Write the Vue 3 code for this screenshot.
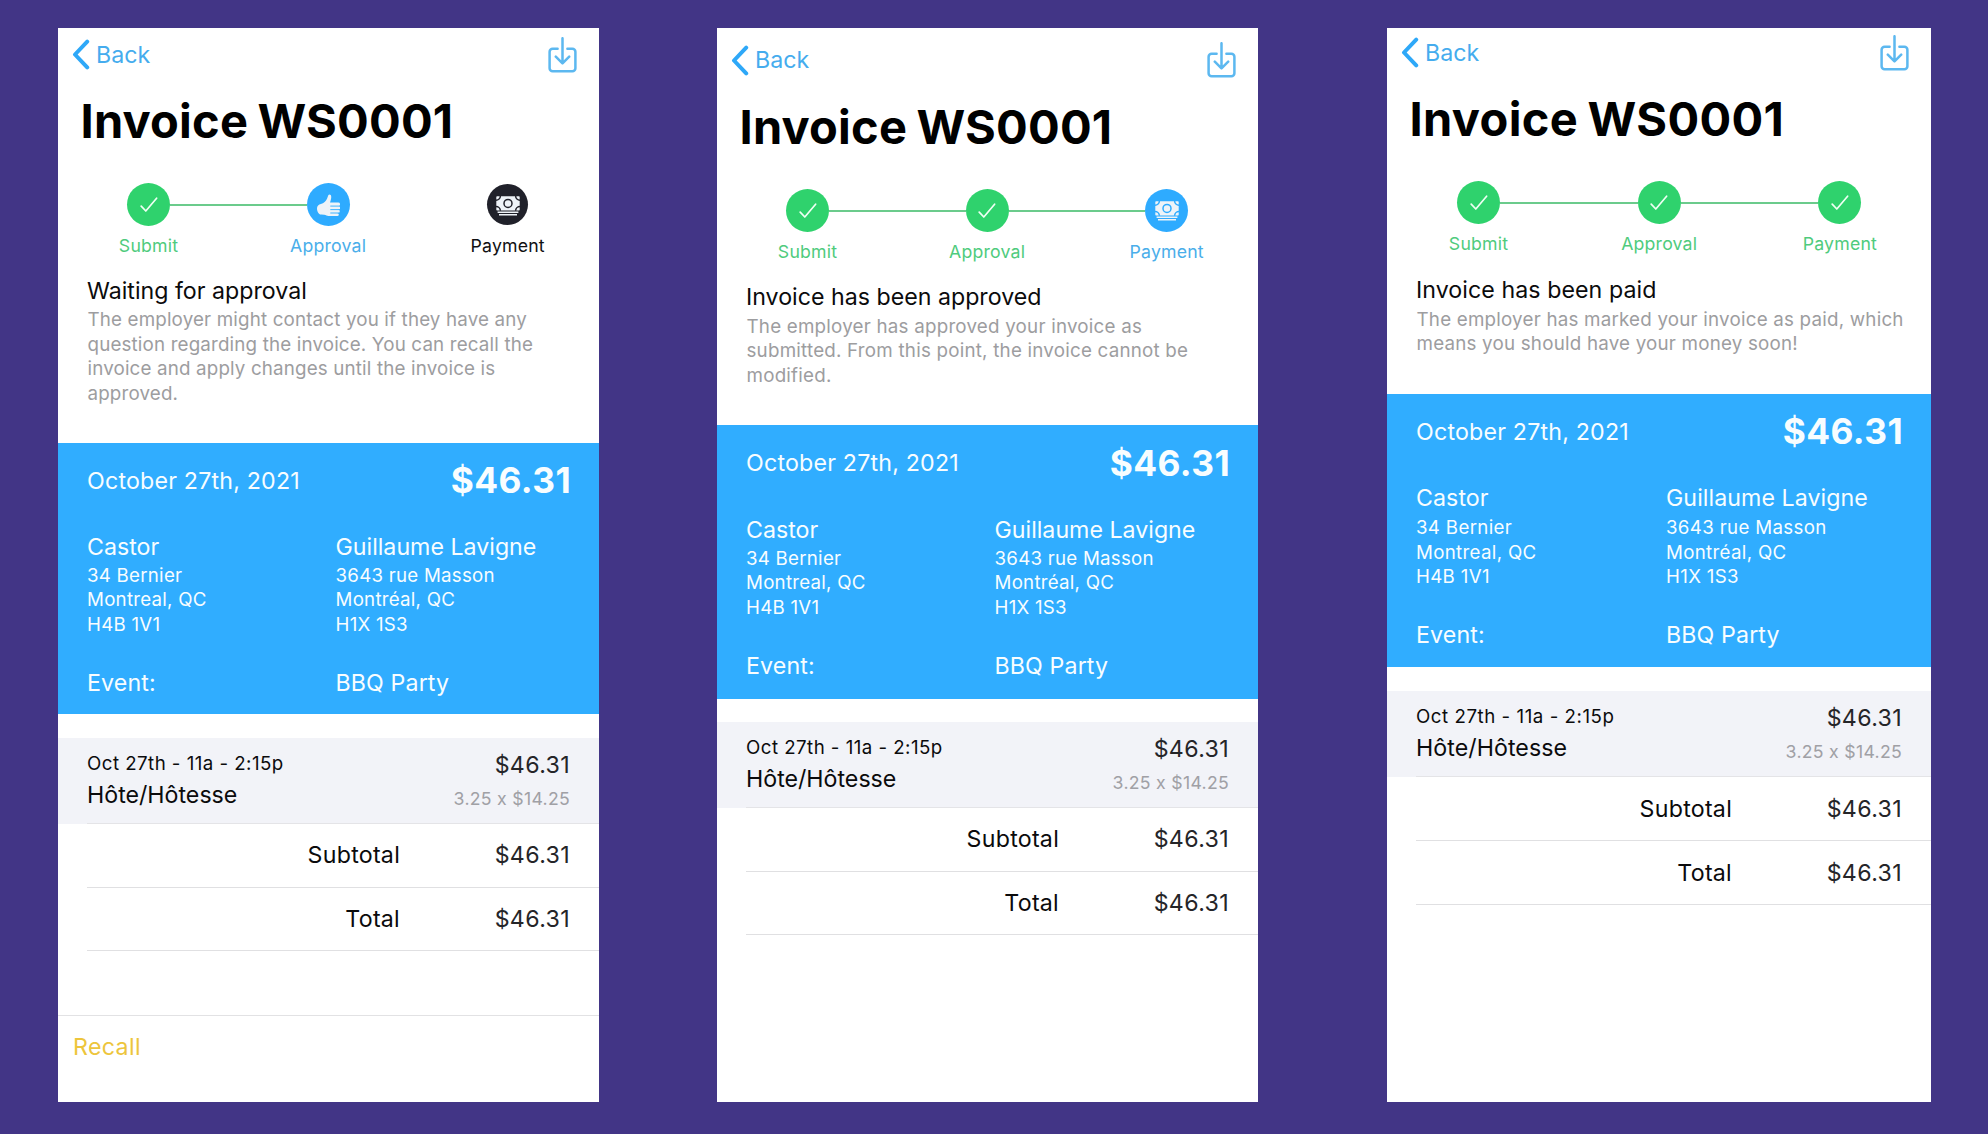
<script setup>
const DONE = 'done'
const CURRENT = 'current'
const PENDING = 'pending'

const screens = [
  {
    id: 'waiting',
    steps: [
      { label: 'Submit', state: DONE, icon: 'check' },
      { label: 'Approval', state: CURRENT, icon: 'thumb' },
      { label: 'Payment', state: PENDING, icon: 'money' },
    ],
    heading: 'Waiting for approval',
    lines: [
      'The employer might contact you if they have any',
      'question regarding the invoice. You can recall the',
      'invoice and apply changes until the invoice is',
      'approved.',
    ],
    action: 'Recall',
  },
  {
    id: 'approved',
    steps: [
      { label: 'Submit', state: DONE, icon: 'check' },
      { label: 'Approval', state: DONE, icon: 'check' },
      { label: 'Payment', state: CURRENT, icon: 'money' },
    ],
    heading: 'Invoice has been approved',
    lines: [
      'The employer has approved your invoice as',
      'submitted. From this point, the invoice cannot be',
      'modified.',
    ],
  },
  {
    id: 'paid',
    steps: [
      { label: 'Submit', state: DONE, icon: 'check' },
      { label: 'Approval', state: DONE, icon: 'check' },
      { label: 'Payment', state: DONE, icon: 'check' },
    ],
    heading: 'Invoice has been paid',
    lines: [
      'The employer has marked your invoice as paid, which',
      'means you should have your money soon!',
    ],
  },
]

const parties = [
  { name: 'Castor', address: ['34 Bernier', 'Montreal, QC', 'H4B 1V1'] },
  { name: 'Guillaume Lavigne', address: ['3643 rue Masson', 'Montréal, QC', 'H1X 1S3'] },
]

const totals = [
  { label: 'Subtotal', amount: '$46.31' },
  { label: 'Total', amount: '$46.31' },
]
</script>

<template>
  <main class="board">
    <article v-for="s in screens" :key="s.id" class="screen" :class="s.id">
      <section class="intro">
        <nav class="nav">
          <a class="back">
            <svg class="chevron" viewBox="0 0 18 31" width="18" height="31">
              <path d="M15.2 2.6 3 15.5l12.2 12.9" />
            </svg>
            <span>Back</span>
          </a>
          <svg class="download" viewBox="0 0 29 36" width="29" height="36">
            <path d="M9.6 11.8H4.6a3 3 0 0 0-3 3v16.400a3 3 0 0 0 3 3h19.800a3 3 0 0 0 3-3V14.800a3 3 0 0 0-3-3h-5" />
            <path d="M14.500 1.200v25M7.800 19.700l6.700 6.700 6.700-6.700" />
          </svg>
        </nav>

        <h1 class="title">Invoice WS0001</h1>

        <ol class="steps">
          <template v-for="(step, i) in s.steps" :key="step.label">
            <li v-if="i > 0" class="link" :class="{ drawn: s.steps[i - 1].state === 'done' }"></li>
            <li class="step" :class="step.state">
              <span class="dot">
                <svg v-if="step.icon === 'check'" class="check" viewBox="0 0 18 16" width="18" height="16">
                  <path d="M1.200 9.200 5.800 14 16.600 1.200" />
                </svg>
                <svg v-else-if="step.icon === 'thumb'" class="thumb" viewBox="0 0 24 23" width="24" height="23">
                  <path
                    class="fill"
                    d="M1 14.200c0-2.400 1.700-3.800 3.900-4.300 3-.8 5-2.600 6.100-5.200l1.300-3.400C12.800.2 14 .2 14.700 1c1 1.200.5 4-.7 7.600h8.300a1.600 1.600 0 0 1 0 3.500h.500a1.600 1.600 0 0 1 0 3.500h-.600a1.600 1.600 0 0 1-.100 3.300h-.800a1.500 1.500 0 0 1 0 3H12.400c-1.500 0-2.300-.9-4.200-1.100l-3-.2C2.400 20.300 1 17.300 1 14.200Z"
                  />
                  <path class="cut" d="M14.300 12.100H24M14.300 15.600H24M14.300 19H23" />
                </svg>
                <svg v-else class="money" viewBox="0 0 24 20" width="24" height="20">
                  <rect class="fill" x=".3" y=".3" width="23.400" height="14.200" rx=".8" />
                  <circle class="cut" cx="12" cy="7.400" r="4" />
                  <path class="cut" d="M4.400 0A4.400 4.400 0 0 1 0 4.200M19.600 0A4.400 4.400 0 0 0 24 4.200M4.400 14.800A4.400 4.400 0 0 0 0 10.600M19.600 14.800A4.400 4.400 0 0 1 24 10.600" />
                  <path class="bar" d="M1.600 16.200h20.800M3 18.700h18" />
                </svg>
              </span>
              <span class="label">{{ step.label }}</span>
            </li>
          </template>
        </ol>

        <h2 class="heading">{{ s.heading }}</h2>
        <p class="message">
          <span v-for="line in s.lines" :key="line">{{ line }}</span>
        </p>
      </section>

      <section class="summary">
        <div class="headline">
          <span>October 27th, 2021</span>
          <strong>$46.31</strong>
        </div>
        <div class="parties">
          <div v-for="p in parties" :key="p.name" class="party">
            <h3>{{ p.name }}</h3>
            <address>
              <span v-for="a in p.address" :key="a">{{ a }}</span>
            </address>
          </div>
        </div>
        <div class="event">
          <span class="event-key">Event:</span>
          <span>BBQ Party</span>
        </div>
      </section>

      <section class="item">
        <div class="item-main">
          <span class="when">Oct 27th - 11a - 2:15p</span>
          <span class="role">Hôte/Hôtesse</span>
        </div>
        <div class="item-side">
          <span class="amount">$46.31</span>
          <span class="rate">3.25 x $14.25</span>
        </div>
      </section>

      <dl class="totals">
        <div v-for="t in totals" :key="t.label" class="row">
          <dt>{{ t.label }}</dt>
          <dd>{{ t.amount }}</dd>
        </div>
      </dl>

      <footer v-if="s.action" class="toolbar">
        <a>{{ s.action }}</a>
      </footer>
    </article>
  </main>
</template>

<style>
body {
  margin: 0;
  background: #423586;
}
</style>

<style scoped>
.board {
  box-sizing: border-box;
  width: 1988px;
  height: 1134px;
  padding: 28px 57px 32px 58px;
  display: flex;
  align-items: stretch;
  background: #423586;
  font-family: Inter, "Liberation Sans", sans-serif;
  font-size: 23.2px;
  font-weight: 400;
  color: #0b0b0c;
  overflow: hidden;
}

h1, h2, h3, p, ol, dl, dd, address {
  margin: 0;
  padding: 0;
  font-style: normal;
  font-weight: 400;
  font-size: inherit;
}

ol {
  list-style: none;
}

.screen {
  width: 541px;
  display: flex;
  flex-direction: column;
  background: #fff;
  white-space: nowrap;
}

.waiting {
  --lift: 2.5px;
  --intro: 415px;
  --label-gap: 8.5px;
  --message-gap: 3px;
  --summary: 271px;
  --item-gap: 24px;
  --summary-top: 16px;
  --address-gap: 2.8px;
  --row: 63.5px;
}

.approved {
  --lift: 8px;
  --intro: 397px;
  --label-gap: 9px;
  --message-gap: 3.5px;
  --summary: 273.5px;
  --item-gap: 23.5px;
  --summary-top: 16.5px;
  --address-gap: 3px;
  --row: 63.5px;
  margin-left: 118px;
}

.paid {
  --lift: 0.5px;
  --intro: 366px;
  --label-gap: 9px;
  --message-gap: 4px;
  --summary: 273px;
  --item-gap: 24px;
  --summary-top: 16px;
  --address-gap: 4px;
  --row: 64px;
  width: 544px;
  margin-left: 129px;
  letter-spacing: 0.06px;
}

.intro {
  box-sizing: border-box;
  flex: none;
  height: var(--intro);
  padding-top: var(--lift);
}

.nav {
  height: 48px;
  padding: 0 22px 0 13.5px;
  display: flex;
  align-items: center;
  justify-content: space-between;
}

.back {
  display: flex;
  align-items: center;
  gap: 6.5px;
  color: #45acee;
}

svg {
  display: block;
  fill: none;
}

.chevron {
  stroke: #2ea8f8;
  stroke-width: 4;
  stroke-linecap: round;
  stroke-linejoin: round;
}

.download {
  stroke: #5cb8f0;
  stroke-width: 2.5;
  stroke-linecap: round;
  stroke-linejoin: round;
}

.title {
  height: 58px;
  margin: 13.5px 0 0 22.5px;
  line-height: 58px;
  font-size: 47px;
  font-weight: 700;
  letter-spacing: 0.2px;
  word-spacing: -2px;
  color: #000;
}

.paid .title {
  letter-spacing: 0.33px;
}

.steps {
  display: flex;
  margin: 33px 69px 0 69px;
}

.paid .steps {
  margin-left: 70px;
}

.step {
  flex: none;
  width: 43px;
  display: flex;
  flex-direction: column;
  align-items: center;
}

.dot {
  width: 43px;
  height: 43px;
  border-radius: 50%;
  display: flex;
  align-items: center;
  justify-content: center;
  background: var(--tone);
}

.pending .dot {
  width: 41px;
  height: 41px;
  margin: 1px;
}

.label {
  height: 22px;
  margin-top: var(--label-gap);
  line-height: 22px;
  font-size: 17.7px;
  letter-spacing: 0.18px;
  color: var(--ink);
}

.done {
  --tone: #2fd26d;
  --ink: #4fcb7d;
}

.current {
  --tone: #2eabff;
  --ink: #4aaeea;
}

.pending {
  --tone: #20212a;
  --ink: #101012;
}

.link {
  width: 136.6px;
  height: 2px;
  margin-top: 21px;
}

.paid .link {
  width: 137.7px;
}

.link.drawn {
  background: #6bcb8c;
}

.check {
  stroke: #effff4;
  stroke-width: 1.7;
  stroke-linecap: round;
  stroke-linejoin: round;
  margin-top: 1px;
}

.thumb,
.money {
  margin-top: 2px;
}

.fill {
  fill: #eef3f8;
}

.cut {
  stroke: var(--tone);
  stroke-width: 1.5;
}

.thumb .cut {
  stroke-width: 0.9;
}

.bar {
  stroke: #eef3f8;
  stroke-width: 1.6;
}

.heading {
  height: 28px;
  margin: 20.5px 0 0 29px;
  line-height: 28px;
}

.message {
  margin: var(--message-gap) 0 0 29.5px;
  display: flex;
  flex-direction: column;
  font-size: 18.8px;
  line-height: 24.5px;
  letter-spacing: 0.15px;
  color: #9d9d9f;
}

.approved .message {
  letter-spacing: 0.21px;
}

.paid .message {
  letter-spacing: 0.2px;
}

.summary {
  box-sizing: border-box;
  flex: none;
  height: var(--summary);
  padding: var(--summary-top) 28px 0 29px;
  background: #30adff;
  color: #f8fdff;
}

.headline {
  height: 43px;
  display: flex;
  align-items: center;
  justify-content: space-between;
  letter-spacing: 0.2px;
}

.headline strong {
  font-size: 35.3px;
  font-weight: 700;
  letter-spacing: 0.4px;
}

.parties {
  display: flex;
  margin-top: 31px;
}

.party:first-child,
.event-key {
  width: 248.5px;
}

.paid .party:first-child,
.paid .event-key {
  width: 250px;
}

.party h3 {
  height: 28px;
  line-height: 28px;
}

address {
  margin-top: var(--address-gap);
  display: flex;
  flex-direction: column;
  font-size: 18.7px;
  line-height: 24.6px;
  letter-spacing: 0.25px;
}

.paid address {
  letter-spacing: 0.33px;
}

.event {
  height: 28px;
  margin-top: 31.5px;
  display: flex;
  line-height: 28px;
  letter-spacing: 0.12px;
}

.item {
  box-sizing: border-box;
  flex: none;
  height: 86px;
  margin-top: var(--item-gap);
  padding: 0 29px 0 29px;
  display: flex;
  justify-content: space-between;
  background: #f2f3f8;
}

.item-main,
.item-side {
  display: flex;
  flex-direction: column;
}

.item-side {
  align-items: flex-end;
}

.when {
  height: 24px;
  margin-top: 14px;
  line-height: 24px;
  font-size: 18.7px;
  letter-spacing: 0.46px;
}

.paid .when {
  letter-spacing: 0.54px;
}

.role {
  height: 28px;
  margin-top: 5px;
  line-height: 28px;
}

.amount {
  height: 28px;
  margin-top: 13px;
  line-height: 28px;
  letter-spacing: 0.35px;
  color: #252528;
}

.rate {
  height: 24px;
  margin-top: 7.5px;
  line-height: 24px;
  font-size: 17.7px;
  letter-spacing: 0.28px;
  color: #a0a0a5;
}

.totals {
  flex: none;
  margin-left: 29px;
  border-top: 1px solid #e4e4e7;
  margin-top: -1px;
}

.row {
  box-sizing: border-box;
  height: var(--row);
  padding-right: 29px;
  display: flex;
  align-items: center;
  justify-content: flex-end;
  border-bottom: 1px solid #e0e0e2;
}

.row dt {
  letter-spacing: 0.25px;
}

.row dd {
  width: 170px;
  text-align: right;
  letter-spacing: 0.35px;
  color: #252528;
}

.toolbar {
  margin-top: auto;
  box-sizing: border-box;
  height: 87px;
  padding: 16.5px 0 0 15px;
  border-top: 1px solid #e2e2e4;
  line-height: 28px;
  letter-spacing: 0.35px;
  color: #edc53c;
}
</style>
